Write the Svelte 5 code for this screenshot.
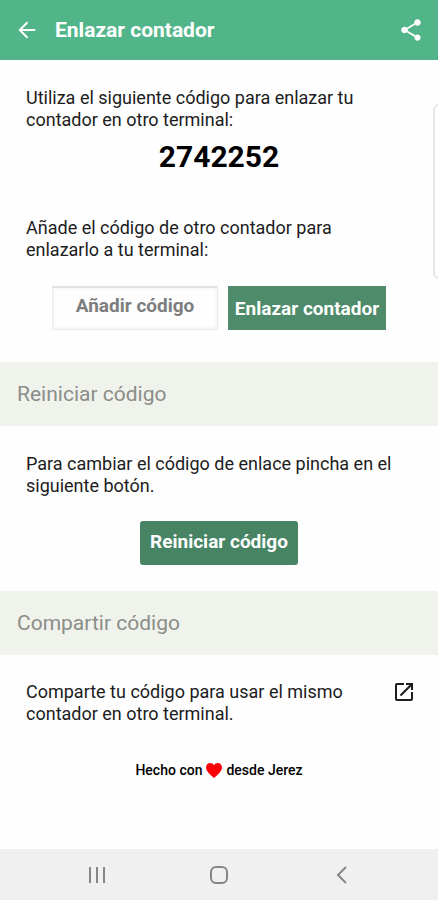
<script lang="ts">
  let code = $state("2742252");
  let otherCode = $state("");

  function link(e: SubmitEvent) {
    e.preventDefault();
    if (otherCode.trim()) code = otherCode.trim();
  }

  function reset() {
    code = String(Math.floor(1000000 + Math.random() * 9000000));
  }

  function share() {
    navigator.share?.({ text: code });
  }
</script>

<div class="screen">
  <header>
    <button type="button" class="icon" aria-label="Volver">
      <svg viewBox="0 0 24 24" width="24" height="24" fill="none" stroke="currentColor" stroke-width="2" stroke-linecap="round">
        <path d="M19.500 12H5M12 4.800L4.800 12l7.200 7.200" />
      </svg>
    </button>
    <h1>Enlazar contador</h1>
    <button type="button" class="icon" aria-label="Compartir" onclick={share}>
      <svg viewBox="0 0 24 24" width="26" height="26" fill="currentColor">
        <path
          d="M18 16.08c-.76 0-1.44.3-1.96.77L8.91 12.7c.05-.23.09-.46.09-.7s-.04-.47-.09-.7l7.05-4.11c.54.5 1.25.81 2.04.81 1.66 0 3-1.34 3-3s-1.34-3-3-3-3 1.34-3 3c0 .24.04.47.09.7L8.04 9.81C7.5 9.31 6.79 9 6 9c-1.66 0-3 1.34-3 3s1.34 3 3 3c.79 0 1.5-.31 2.04-.81l7.12 4.16c-.05.21-.08.43-.08.65 0 1.61 1.31 2.92 2.92 2.92s2.92-1.31 2.92-2.92-1.31-2.92-2.92-2.92z"
        />
      </svg>
    </button>
  </header>

  <main>
    <section class="block">
      <p>Utiliza el siguiente código para enlazar tu contador en otro terminal:</p>
      <output class="code">{code}</output>
      <label for="other-code">Añade el código de otro contador para enlazarlo a tu terminal:</label>
      <form onsubmit={link}>
        <input id="other-code" type="text" placeholder="Añadir código" bind:value={otherCode} />
        <button type="submit" class="primary square">Enlazar contador</button>
      </form>
    </section>

    <h2>Reiniciar código</h2>
    <section class="block reset">
      <p>Para cambiar el código de enlace pincha en el siguiente botón.</p>
      <button type="button" class="primary" onclick={reset}>Reiniciar código</button>
    </section>

    <h2>Compartir código</h2>
    <section class="block share">
      <p>Comparte tu código para usar el mismo contador en otro terminal.</p>
      <button type="button" class="icon" aria-label="Compartir código" onclick={share}>
        <svg viewBox="1 1 22 22" width="22" height="22" fill="currentColor">
          <path
            d="M19 19H5V5h7V3H5c-1.11 0-2 .9-2 2v14c0 1.1.89 2 2 2h14c1.1 0 2-.9 2-2v-7h-2v7zM14 3v2h3.59l-9.83 9.83 1.41 1.41L19 6.41V10h2V3h-7z"
          />
        </svg>
      </button>
    </section>

    <footer>
      Hecho con
      <svg viewBox="0 0 16 15" width="16" height="15" role="img" aria-label="amor">
        <path
          fill="#fb0007"
          d="M8 15C5.500 12.800 0 8.700 0 4.600 0 2 1.900 0 4.300 0 5.900 0 7.200.8 8 2.200 8.800.8 10.100 0 11.700 0 14.100 0 16 2 16 4.600 16 8.700 10.500 12.800 8 15z"
        />
      </svg>
      desde Jerez
    </footer>
  </main>

  <nav>
    <button type="button" class="icon" aria-label="Recientes">
      <svg viewBox="0 0 20 20" width="20" height="20" fill="none" stroke="currentColor" stroke-width="2">
        <path d="M3 2v16M10 2v16M17 2v16" />
      </svg>
    </button>
    <button type="button" class="icon" aria-label="Inicio">
      <svg viewBox="0 0 20 20" width="20" height="20" fill="none" stroke="currentColor" stroke-width="2">
        <rect x="2" y="2" width="16" height="16" rx="5" />
      </svg>
    </button>
    <button type="button" class="icon" aria-label="Atrás">
      <svg viewBox="0 0 20 20" width="20" height="20" fill="none" stroke="currentColor" stroke-width="2">
        <path d="M15 2L7 10l8 8" />
      </svg>
    </button>
  </nav>

  <div class="edge-handle"></div>
</div>

<style>
  :global(body) {
    margin: 0;
    background: #fefefe;
  }

  .screen {
    position: relative;
    display: flex;
    flex-direction: column;
    min-height: 100vh;
    overflow-x: hidden;
    font-family: Roboto, "Liberation Sans", sans-serif;
    font-size: 18px;
    line-height: 22px;
    color: #1c1c1c;
  }

  header {
    display: flex;
    align-items: center;
    height: 60px;
    padding: 0 14px 0 15px;
    background: #52b58a;
    color: #fff;
  }

  h1 {
    flex: 1;
    margin: 0 0 0 16px;
    font-size: 21px;
    font-weight: 700;
  }

  main {
    flex: 1;
  }

  .icon {
    display: flex;
    padding: 0;
    border: 0;
    background: none;
    color: inherit;
    cursor: pointer;
  }

  .block {
    display: flex;
    flex-direction: column;
    padding: 27px 26px 32px;
  }

  .block p {
    margin: 0;
  }

  .block label {
    padding-right: 24px;
  }

  .code {
    margin: 8px 0 42px;
    font-size: 30px;
    font-weight: 700;
    line-height: 36px;
    text-align: center;
    color: #000;
  }

  form {
    display: flex;
    justify-content: center;
    gap: 10px;
    margin-top: 25px;
  }

  input {
    box-sizing: border-box;
    width: 166px;
    height: 44px;
    padding: 0 0 6px;
    border: 1px solid #ebebeb;
    border-top: 2px solid #e2e2e2;
    background: #fefefe;
    box-shadow: inset 0 0 4px #eee;
    font: 700 19px Roboto, "Liberation Sans", sans-serif;
    text-align: center;
    color: #444;
  }

  input::placeholder {
    color: #7d7d7d;
    opacity: 1;
  }

  .primary {
    min-width: 158px;
    height: 44px;
    padding: 0 6px 3px;
    border: 0;
    border-radius: 3px;
    background: #478464;
    color: #fff;
    font: 700 19px Roboto, "Liberation Sans", sans-serif;
    white-space: nowrap;
    cursor: pointer;
  }

  .primary.square {
    padding-bottom: 0;
    border-radius: 0;
    background: #4d8b6a;
  }

  h2 {
    margin: 0;
    padding: 21px 17px;
    background: #f0f3ec;
    font-size: 21px;
    font-weight: 400;
    line-height: 22px;
    color: #8b8d89;
  }

  .reset {
    gap: 24px;
    padding-bottom: 26px;
  }

  .reset .primary {
    align-self: center;
  }

  .share {
    flex-direction: row;
    align-items: flex-start;
    justify-content: space-between;
    gap: 24px;
    padding: 26px 23px 34px 26px;
  }

  footer {
    display: flex;
    align-items: center;
    justify-content: center;
    gap: 4px;
    font-size: 14px;
    font-weight: 500;
    color: #000;
  }

  nav {
    display: flex;
    align-items: center;
    justify-content: space-around;
    height: 51px;
    padding: 0 36px;
    background: #f0f0f0;
    color: #868686;
  }

  /* system edge panel handle, peeking in from the right */
  .edge-handle {
    position: absolute;
    top: 104px;
    right: -8px;
    box-sizing: border-box;
    width: 13px;
    height: 175px;
    border: 2px solid #e6e6e6;
    border-radius: 6px;
    background: #fefefe;
  }
</style>
